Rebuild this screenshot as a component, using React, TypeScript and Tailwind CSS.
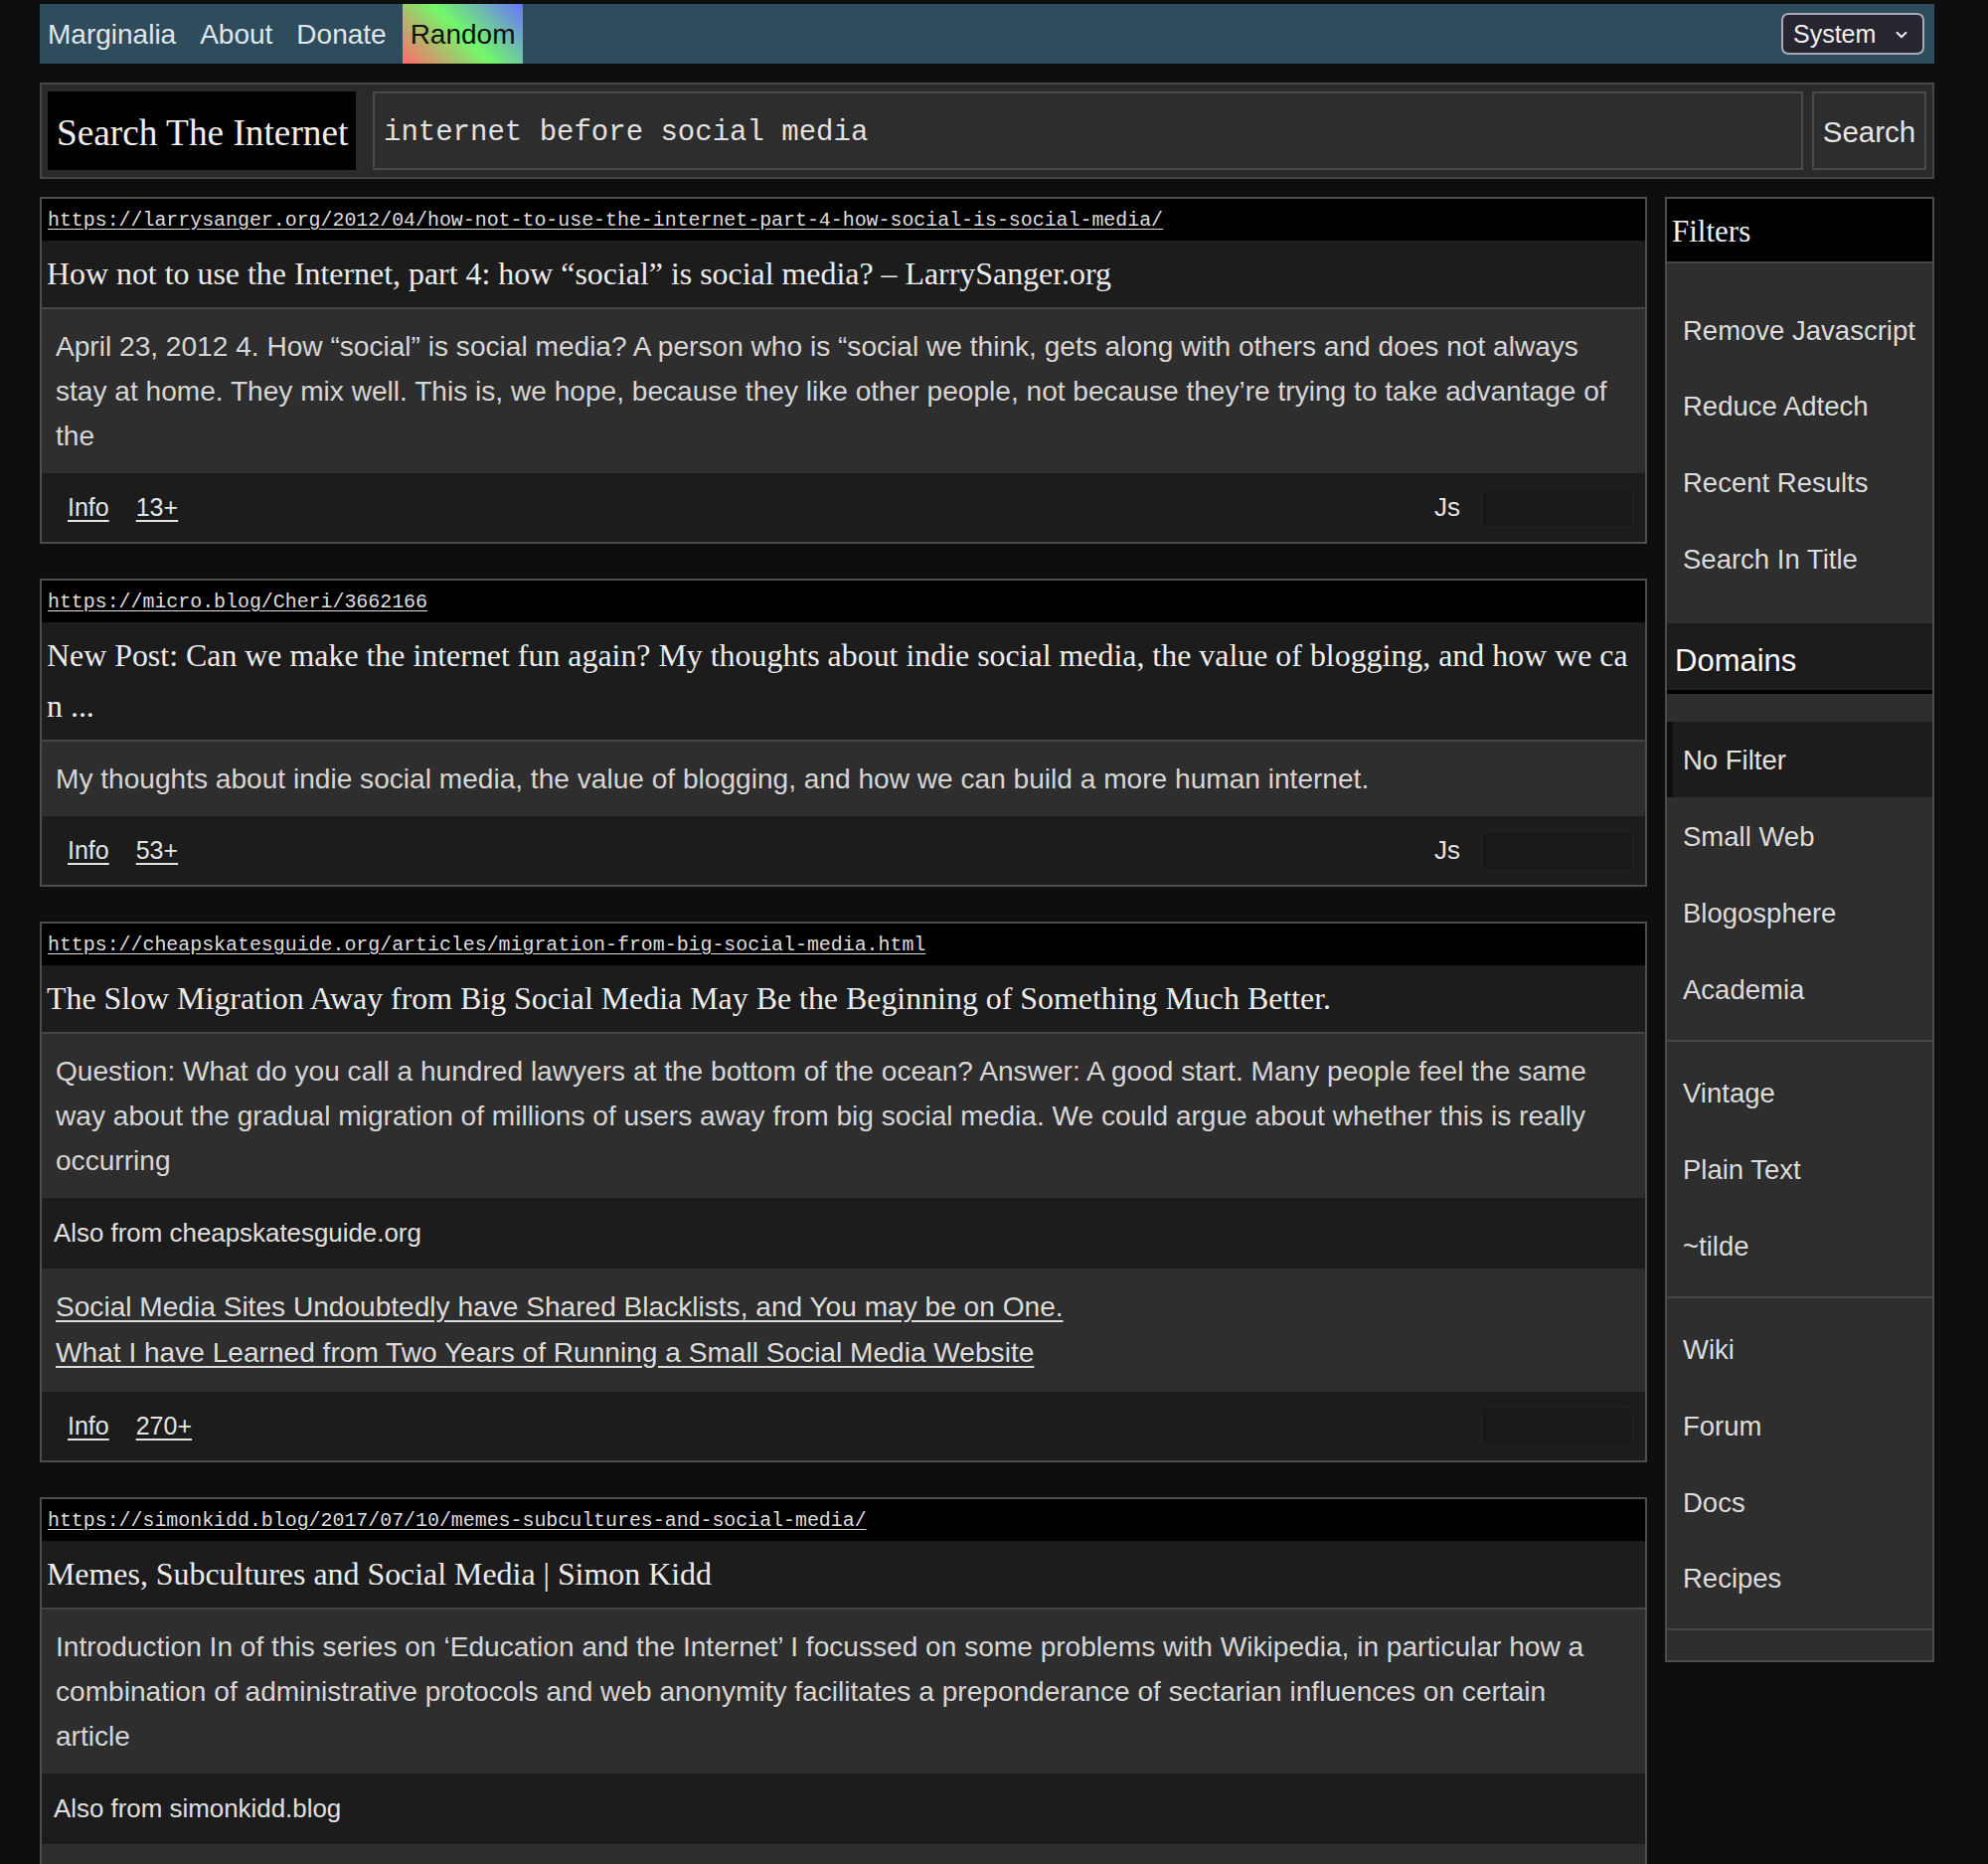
import React from "react";
import { ChevronDown } from "lucide-react";

const sans = "font-['Liberation_Sans',Arial,sans-serif]";
const serif = "font-['Liberation_Serif','Times_New_Roman',serif]";
const mono = "font-['Liberation_Mono','Courier_New',monospace]";

function Footer({ info, js = true }: { info: string; js?: boolean }) {
  return (
    <div className="h-[69px] bg-[#1c1c1c] flex items-center pl-[18px] pr-[12px]">
      <div className="flex gap-[11px] text-[25px] text-[#e4e4e4]">
        <a className="px-2 underline underline-offset-[4px]">Info</a>
        <a className="px-2 underline underline-offset-[4px]">{info}</a>
      </div>
      <div className="ml-auto flex items-center gap-[21px]">
        {js && <span className="text-[26px] text-[#e4e4e4]">Js</span>}
        <div className="w-[153px] h-[40px] rounded-[5px] bg-[#191919] border border-[#222222]" />
      </div>
    </div>
  );
}

function Url({ href }: { href: string }) {
  return (
    <div className="h-[42px] bg-black px-[6px] flex items-center pt-[2px]">
      <a className={`${mono} text-[19.9px] text-[#dedede] underline underline-offset-[3px]`}>{href}</a>
    </div>
  );
}

function Title({ lines }: { lines: string[] }) {
  return (
    <div className={`${serif} bg-[#1c1c1c] px-[5px] py-[8px] text-[31.9px] leading-[51px] text-[#ececec] border-b-2 border-[#454545] break-all`}>
      {lines.map((l, i) => (
        <React.Fragment key={i}>
          {i > 0 && <br />}
          {l}
        </React.Fragment>
      ))}
    </div>
  );
}

function Desc({ lines }: { lines: string[] }) {
  return (
    <div className="bg-[#2e2e2e] px-[14px] py-[15px] text-[28.1px] leading-[45px] text-[#d6d6d6]">
      {lines.map((l, i) => (
        <React.Fragment key={i}>
          {i > 0 && <br />}
          {l}
        </React.Fragment>
      ))}
    </div>
  );
}

function AlsoFrom({ domain }: { domain: string }) {
  return (
    <div className="h-[71px] bg-[#1c1c1c] px-[12px] flex items-center text-[25.9px] text-[#e0e0e0]">
      Also from {domain}
    </div>
  );
}

function Links({ links }: { links: string[] }) {
  return (
    <div className="bg-[#2e2e2e] px-[14px] py-[16px] text-[28.1px] leading-[46px] text-[#dcdcdc] flex flex-col">
      {links.map((l) => (
        <a key={l} className="underline underline-offset-[4px]">
          {l}
        </a>
      ))}
    </div>
  );
}

function SideItem({ label, active = false }: { label: string; active?: boolean }) {
  return (
    <div
      className={
        active
          ? "h-[76.7px] flex items-center bg-[#1c1c1c] border-l-[6px] border-[#0e0e0e] pl-[10px] pt-[2px] text-[27.5px] text-[#e2e2e2]"
          : "h-[76.7px] flex items-center pl-[16px] pt-[2px] text-[27.5px] text-[#dcdcdc]"
      }
    >
      {label}
    </div>
  );
}

export default function App() {
  return (
    <div className={`${sans} min-h-screen bg-[#0e0e0e] pt-[4px] pl-[40px] pr-[54px] pb-[40px]`}>
      <nav className="h-[60px] bg-[#2f4c5d] flex items-stretch">
        <div className="flex gap-2 text-[28px]">
          <a className="px-2 flex items-center pt-[2px] text-[#dfe7ec]">Marginalia</a>
          <a className="px-2 flex items-center pt-[2px] text-[#dfe7ec]">About</a>
          <a className="px-2 flex items-center pt-[2px] text-[#dfe7ec]">Donate</a>
          <a className="px-2 flex items-center pt-[2px] text-[#111] bg-[linear-gradient(45deg,#ff6a6a_0%,#72f86a_50%,#6a72ff_100%)]">
            Random
          </a>
        </div>
        <div className="ml-auto flex items-center pr-[10px]">
          <div className="h-[42px] w-[144px] rounded-[7px] border-2 border-[#a9a9b8] bg-[#272630] flex items-center pl-[10px] pr-[12px] pt-[2px] text-[25px] text-[#f0f0f0]">
            <span>System</span>
            <ChevronDown className="ml-auto w-[18px] h-[18px]" strokeWidth={2.5} />
          </div>
        </div>
      </nav>

      <form className="mt-[19px] h-[97px] bg-[#2a2a2a] border-2 border-[#474747] flex items-center px-[6px]">
        <div className={`${serif} w-[310px] h-[79px] bg-black flex items-center pl-[9px] pt-[4px] text-[37.3px] text-[#efefef]`}>
          Search The Internet
        </div>
        <div className={`${mono} ml-[17px] flex-1 h-[79px] bg-[#2d2d2d] border-2 border-[#4a4a4a] flex items-center pl-[9px] pt-[5px] text-[29px] text-[#e2e2e2]`}>
          internet before social media
        </div>
        <div className="ml-[9px] w-[115px] h-[79px] bg-[#2d2d2d] border-2 border-[#4a4a4a] flex items-center justify-center pt-[4px] text-[29.5px] text-[#e6e6e6]">
          Search
        </div>
      </form>

      <div className="mt-[18px] flex items-start gap-[18px]">
        <div className="w-[1617px] flex flex-col gap-[35px]">
          <div className="border-2 border-[#4d4d4d]">
            <Url href="https://larrysanger.org/2012/04/how-not-to-use-the-internet-part-4-how-social-is-social-media/" />
            <Title lines={["How not to use the Internet, part 4: how \u201csocial\u201d is social media? \u2013 LarrySanger.org"]} />
            <Desc
              lines={[
                "April 23, 2012 4. How \u201csocial\u201d is social media? A person who is \u201csocial we think, gets along with others and does not always",
                "stay at home. They mix well. This is, we hope, because they like other people, not because they\u2019re trying to take advantage of",
                "the",
              ]}
            />
            <Footer info="13+" />
          </div>

          <div className="border-2 border-[#4d4d4d]">
            <Url href="https://micro.blog/Cheri/3662166" />
            <Title
              lines={[
                "New Post: Can we make the internet fun again? My thoughts about indie social media, the value of blogging, and how we ca",
                "n ...",
              ]}
            />
            <Desc lines={["My thoughts about indie social media, the value of blogging, and how we can build a more human internet."]} />
            <Footer info="53+" />
          </div>

          <div className="border-2 border-[#4d4d4d]">
            <Url href="https://cheapskatesguide.org/articles/migration-from-big-social-media.html" />
            <Title lines={["The Slow Migration Away from Big Social Media May Be the Beginning of Something Much Better."]} />
            <Desc
              lines={[
                "Question: What do you call a hundred lawyers at the bottom of the ocean? Answer: A good start. Many people feel the same",
                "way about the gradual migration of millions of users away from big social media. We could argue about whether this is really",
                "occurring",
              ]}
            />
            <AlsoFrom domain="cheapskatesguide.org" />
            <Links
              links={[
                "Social Media Sites Undoubtedly have Shared Blacklists, and You may be on One.",
                "What I have Learned from Two Years of Running a Small Social Media Website",
              ]}
            />
            <Footer info="270+" js={false} />
          </div>

          <div className="border-2 border-[#4d4d4d]">
            <Url href="https://simonkidd.blog/2017/07/10/memes-subcultures-and-social-media/" />
            <Title lines={["Memes, Subcultures and Social Media | Simon Kidd"]} />
            <Desc
              lines={[
                "Introduction In of this series on \u2018Education and the Internet\u2019 I focussed on some problems with Wikipedia, in particular how a",
                "combination of administrative protocols and web anonymity facilitates a preponderance of sectarian influences on certain",
                "article",
              ]}
            />
            <AlsoFrom domain="simonkidd.blog" />
            <div className="h-[120px] bg-[#2e2e2e]" />
          </div>
        </div>

        <aside className="w-[271px] border-2 border-[#4d4d4d] bg-[#2e2e2e]">
          <div className={`${serif} h-[65px] bg-black flex items-center pl-[5px] pt-[3px] text-[31px] text-[#f0f0f0] border-b-2 border-[#454545]`}>
            Filters
          </div>
          <div className="pt-[28px] pb-[27px]">
            <SideItem label="Remove Javascript" />
            <SideItem label="Reduce Adtech" />
            <SideItem label="Recent Results" />
            <SideItem label="Search In Title" />
          </div>
          <div className="h-[71px] bg-[#1c1c1c] flex items-center pl-[8px] pt-[10px] text-[31px] text-white border-b-4 border-black">
            Domains
          </div>
          <div className="pt-[28px] pb-[13px]">
            <SideItem label="No Filter" active />
            <SideItem label="Small Web" />
            <SideItem label="Blogosphere" />
            <SideItem label="Academia" />
          </div>
          <div className="border-t-2 border-[#474747] py-[13px]">
            <SideItem label="Vintage" />
            <SideItem label="Plain Text" />
            <SideItem label="~tilde" />
          </div>
          <div className="border-t-2 border-[#474747] py-[13px]">
            <SideItem label="Wiki" />
            <SideItem label="Forum" />
            <SideItem label="Docs" />
            <SideItem label="Recipes" />
          </div>
          <div className="border-t-2 border-[#474747] h-[32px]" />
        </aside>
      </div>
    </div>
  );
}
